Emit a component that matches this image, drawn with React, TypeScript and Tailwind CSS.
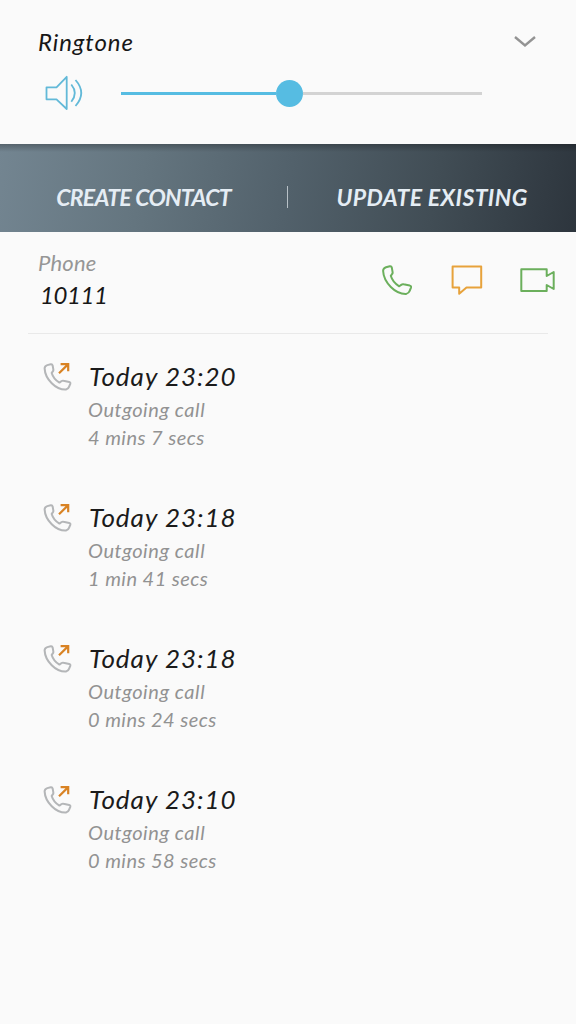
type Call = { time: string; duration: string };

const calls: Call[] = [
  { time: "Today 23:20", duration: "4 mins 7 secs" },
  { time: "Today 23:18", duration: "1 min 41 secs" },
  { time: "Today 23:18", duration: "0 mins 24 secs" },
  { time: "Today 23:10", duration: "0 mins 58 secs" },
];

const HANDSET =
  "M4 2.3 L7.8 1.3 Q9.4 1 9.8 2.6 L10.6 7.2 Q10.8 8.3 10 9.2 L8.8 10.8 C10 15 13.2 18.9 17.2 21.3 L19.6 19.6 Q20.5 19 21.6 19.3 L27.8 20.6 Q29.4 21 29 22.6 L27.6 26 Q26.8 28.2 24.3 28.9 C13.5 29.4 1.6 17.6 1.1 5.8 Q1.2 3.2 4 2.3 Z";

const SpeakerIcon = () => (
  <svg width="40" height="36" viewBox="0 0 40 36" fill="none" stroke="#62b9d8" strokeWidth="1.8">
    <path d="M2.5 12.3 H12.5 L22.7 1.8 V34 L12.5 24.3 H2.5 Z" strokeLinejoin="round" />
    <path d="M27.3 9.5 Q34.3 18 27.3 26.8" />
    <path d="M31.5 5 Q43 18 31.5 31" />
  </svg>
);

const Handset = ({ className }: { className: string }) => (
  <svg className={className} viewBox="0 0 30 30" fill="none" stroke="currentColor" strokeWidth="2">
    <path d={HANDSET} strokeLinejoin="round" />
  </svg>
);

const CallRow = ({ call }: { call: Call }) => (
  <li className="flex h-[141px]">
    <svg className="mt-px ml-[43px] shrink-0" width="30" height="30" viewBox="0 0 30 30" fill="none">
      <path d={HANDSET} transform="translate(.6 1) scale(.92)" stroke="#b4b6b8" strokeWidth="2.2" strokeLinejoin="round" />
      <path d="M16 11.2 L25 2.4 M17.6 2.1 H25.2 V9.3" stroke="#d98324" strokeWidth="2.2" />
    </svg>
    <div className="ml-[15px] whitespace-nowrap italic">
      <p className="-mt-px pl-px text-[26px] leading-8 tracking-[1px] text-[#1b1b1b]">{call.time}</p>
      <p className="mt-[3px] text-[20px] leading-7 tracking-[0.55px] text-[#929292]">Outgoing call</p>
      <p className="text-[20px] leading-7 tracking-[0.45px] text-[#929292]">{call.duration}</p>
    </div>
  </li>
);

const App = () => {
  return (
    <div className="h-[1024px] w-[576px] overflow-hidden bg-[#fafafa] font-['Lato',sans-serif]">
      <header className="h-36 pt-7">
        <div className="flex items-center justify-between pr-[40px] pl-[38px]">
          <h1 className="text-[24px] leading-7 tracking-[0.9px] text-[#171717] italic">Ringtone</h1>
          <svg width="22" height="12" viewBox="0 0 22 12" fill="none" stroke="#939393" strokeWidth="2.4">
            <path d="M1 1 L11 9.5 L21 1" />
          </svg>
        </div>
        <div className="mt-[19px] flex items-center pl-[44px]">
          <SpeakerIcon />
          <div className="ml-[37px] flex w-[361px] items-center">
            <div className="h-[3px] w-[155px] bg-[#56bce2]" />
            <div className="size-[27px] rounded-full bg-[#56bce2]" />
            <div className="h-[3px] grow bg-[#d3d3d3]" />
          </div>
        </div>
      </header>

      <div className="relative flex h-[88px] items-center bg-[linear-gradient(100deg,#738591_0%,#64757f_25%,#52616b_50%,#414d55_75%,#2d353d_100%)] pt-[18px] text-[23px] font-bold whitespace-nowrap text-[#e5edf4] italic">
        <div className="absolute inset-x-0 top-0 h-2 bg-gradient-to-b from-black/25 to-transparent" />
        <button className="w-[287px] text-center tracking-[-0.7px]">CREATE CONTACT</button>
        <span className="h-[22px] w-px bg-[#b8c1c7]" />
        <button className="w-[288px] text-center tracking-[0.4px]">UPDATE EXISTING</button>
      </div>

      <section className="mr-[28px] ml-[28px] flex h-[102px] border-b border-[#e9e9e9] pt-[17px] pl-[10px]">
        <div className="w-[344px] shrink-0 italic">
          <p className="text-[22px] leading-7 tracking-[0.2px] text-[#969696]">Phone</p>
          <p className="pl-[2px] text-[24px] leading-9 tracking-[-0.4px] text-[#171717]">10111</p>
        </div>
        <div className="mt-[16px] flex shrink-0 items-start text-[#6baf5c]">
          <Handset className="size-[30px]" />
          <svg className="ml-[39px]" width="32" height="32" viewBox="0 0 32 32" fill="none" stroke="#e7a23b" strokeWidth="2">
            <path d="M1.6 1.6 H30.2 V22.5 H15.5 L8.2 28.8 V22.5 H1.6 Z" strokeLinejoin="round" />
          </svg>
          <svg className="ml-[37px]" width="36" height="30" viewBox="0 0 36 30" fill="none" stroke="currentColor" strokeWidth="2">
            <path d="M1.3 4.2 H26.7 V11 L33.7 7 V24 L26.7 20 V26 H1.3 Z" strokeLinejoin="round" />
          </svg>
        </div>
      </section>

      <ul className="pt-[27px]">
        {calls.map((call, i) => (
          <CallRow key={i} call={call} />
        ))}
      </ul>
    </div>
  );
};

export default App;
